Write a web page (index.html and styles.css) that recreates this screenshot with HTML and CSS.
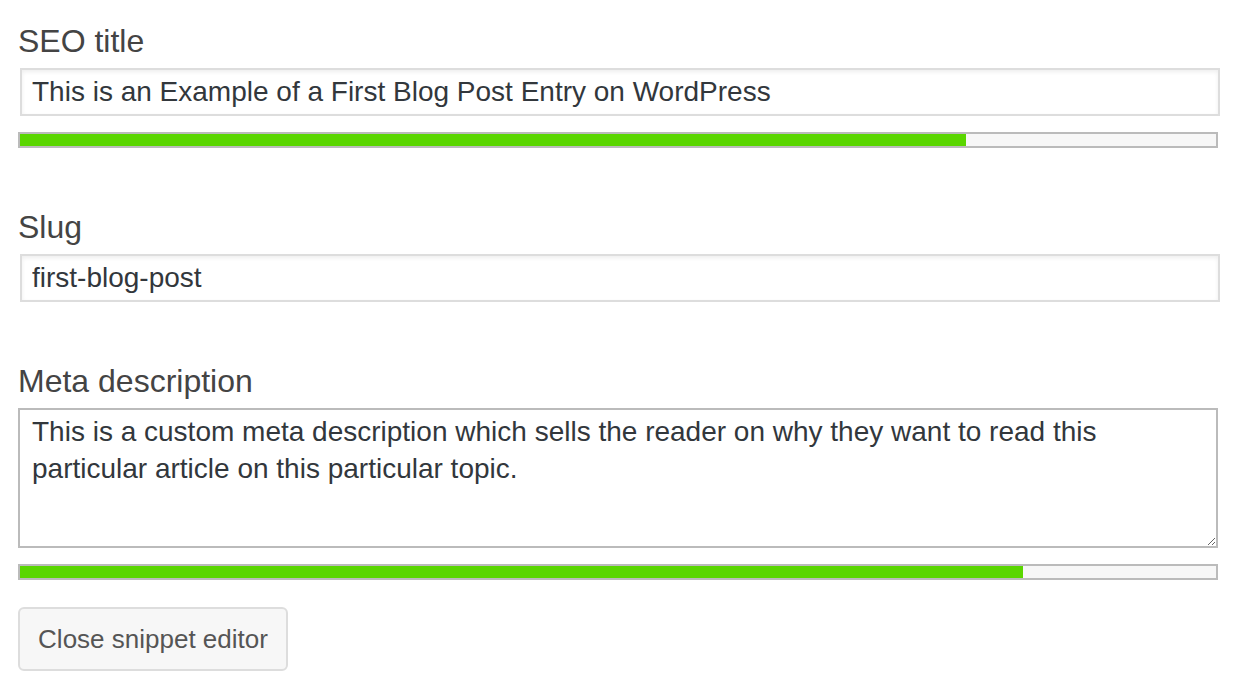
FILE: index.html
```
<!DOCTYPE html>
<html>
<head>
    <title>Snippet editor</title>
    <link rel="stylesheet" href="styles.css">
</head>
<body>
    <div class="snippet-editor">
        <label class="field-label" for="seoTitle">SEO title</label>
        <input id="seoTitle" class="field-input" type="text" value="This is an Example of a First Blog Post Entry on WordPress">
        <div class="progress"><div class="progress-fill" style="width: 79.1%"></div></div>

        <label class="field-label spaced" for="slug">Slug</label>
        <input id="slug" class="field-input" type="text" value="first-blog-post">

        <label class="field-label spaced" for="metaDesc">Meta description</label>
        <textarea id="metaDesc" class="field-textarea">This is a custom meta description which sells the reader on why they want to read this particular article on this particular topic.</textarea>
        <div class="progress"><div class="progress-fill" style="width: 83.9%"></div></div>

        <button class="close-button">Close snippet editor</button>
    </div>
</body>
</html>
```

FILE: styles.css
```
body {
    margin: 0;
    background: #fff;
    font-family: "Liberation Sans", Arial, sans-serif;
}
.snippet-editor {
    width: 1200px;
    padding: 22px 0 0 18px;
    display: flex;
    flex-direction: column;
    align-items: flex-start;
}
.field-label {
    display: block;
    font-size: 32px;
    line-height: 38px;
    color: #444;
    margin-bottom: 8px;
}
.field-label.spaced {
    margin-top: 60px;
}
.field-input {
    box-sizing: border-box;
    width: 1200px;
    height: 48px;
    margin: 0 0 0 2px;
    padding: 0 10px;
    border: 2px solid #ddd;
    box-shadow: inset 0 2px 4px rgba(0, 0, 0, 0.07);
    font-family: inherit;
    font-size: 28px;
    color: #32373c;
    background: #fff;
    outline: none;
}
.field-textarea {
    box-sizing: border-box;
    width: 1200px;
    height: 140px;
    margin: 0;
    padding: 3px 12px;
    border: 2px solid #bbb;
    font-family: inherit;
    font-size: 28px;
    line-height: 37px;
    color: #32373c;
    background: #fff;
    outline: none;
}
.progress {
    box-sizing: border-box;
    width: 1200px;
    height: 16px;
    margin-top: 16px;
    border: 2px solid #bbb;
    background: #f7f7f7;
}
.progress-fill {
    height: 100%;
    background: #5ad600;
}
.close-button {
    margin-top: 27px;
    box-sizing: border-box;
    width: 270px;
    height: 64px;
    padding: 0;
    border: 2px solid #ddd;
    border-radius: 6px;
    background: #f7f7f7;
    color: #555;
    font-family: inherit;
    font-size: 26px;
    white-space: nowrap;
    cursor: pointer;
}
```
